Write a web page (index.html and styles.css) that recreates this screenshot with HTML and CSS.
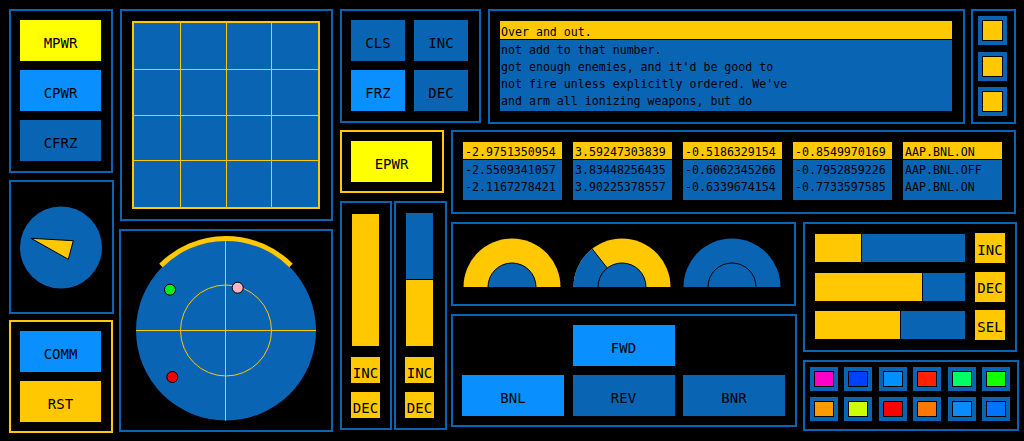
FILE: index.html
```html
<!DOCTYPE html>
<html>
<head>
<meta charset="utf-8">
<link rel="stylesheet" href="styles.css">
</head>
<body>
<div class="dash">
  <div class="col c1">
    <div class="panel p-power">
      <div class="btn big yellow">MPWR</div>
      <div class="btn big light">CPWR</div>
      <div class="btn big dark">CFRZ</div>
    </div>
    <div class="panel p-compass">
      <svg class="compass" width="101" height="130" viewBox="0 0 101 130">
        <circle cx="50" cy="65.5" r="41" fill="#0964b4"/>
        <polygon points="20,56.3 62.3,58.7 57.3,77.3" fill="#ffc800" stroke="#000" stroke-width="1"/>
      </svg>
    </div>
    <div class="panel amber-border p-comm">
      <div class="btn big light">COMM</div>
      <div class="btn big amber">RST</div>
    </div>
  </div>

  <div class="col c2">
    <div class="panel p-grid">
      <svg width="188" height="188" viewBox="0 0 188 188">
        <rect x="1" y="1" width="186" height="186" fill="#0964b4" stroke="#ffc800" stroke-width="2"/>
        <g stroke="#ffc800" stroke-width="1">
          <line x1="48.5" y1="2" x2="48.5" y2="186"/>
          <line x1="94.5" y1="2" x2="94.5" y2="186"/>
          <line x1="139.5" y1="2" x2="139.5" y2="186"/>
          <line x1="2" y1="48.5" x2="186" y2="48.5"/>
          <line x1="2" y1="94.5" x2="186" y2="94.5"/>
          <line x1="2" y1="139.5" x2="186" y2="139.5"/>
        </g>
      </svg>
    </div>
    <div class="panel p-radar">
      <svg width="210" height="199" viewBox="0 0 210 199">
        <circle cx="105" cy="99.5" r="90" fill="#0964b4"/>
        <path d="M 39.95 34.45 A 92 92 0 0 1 170.05 34.45" fill="none" stroke="#ffc800" stroke-width="5"/>
        <g stroke="#ffc800" stroke-width="1" fill="none">
          <line x1="104.5" y1="9.5" x2="104.5" y2="189.5"/>
          <line x1="15" y1="99.5" x2="195" y2="99.5"/>
          <circle cx="105" cy="99.5" r="45.5"/>
        </g>
        <circle cx="49" cy="58.7" r="5.5" fill="#00f01e" stroke="#000" stroke-width="1"/>
        <circle cx="116.7" cy="56.7" r="5.5" fill="#ffb4c0" stroke="#000" stroke-width="1"/>
        <circle cx="51.3" cy="146" r="5.5" fill="#f00000" stroke="#000" stroke-width="1"/>
      </svg>
    </div>
  </div>

  <div class="col c3">
    <div class="row top">
      <div class="panel p-cls">
        <div class="btn big dark">CLS</div>
        <div class="btn big dark">INC</div>
        <div class="btn big light">FRZ</div>
        <div class="btn big dark">DEC</div>
      </div>
      <div class="panel p-text">
        <div class="textbox">
          <div class="tline head">Over and out.</div>
          <div class="tline">not add to that number.</div>
          <div class="tline">got enough enemies, and it'd be good to</div>
          <div class="tline">not fire unless explicitly ordered. We've</div>
          <div class="tline">and arm all ionizing weapons, but do</div>
        </div>
      </div>
      <div class="panel p-squares">
        <div class="sq"><div class="sq-in"></div></div>
        <div class="sq"><div class="sq-in"></div></div>
        <div class="sq"><div class="sq-in"></div></div>
      </div>
    </div>

    <div class="row bottom">
      <div class="col sub-left">
        <div class="panel amber-border p-epwr">
          <div class="btn big yellow">EPWR</div>
        </div>
        <div class="row sliders">
          <div class="panel p-slider">
            <div class="vbar"><div class="vfill" style="height:133px"></div></div>
            <div class="btn small amber">INC</div>
            <div class="btn small amber">DEC</div>
          </div>
          <div class="panel p-slider wide">
            <div class="vbar"><div class="vfill" style="height:67px"></div></div>
            <div class="btn small amber">INC</div>
            <div class="btn small amber">DEC</div>
          </div>
        </div>
      </div>

      <div class="col sub-right">
        <div class="panel p-numbers">
          <div class="ncol">
            <div class="nrow head">-2.9751350954</div>
            <div class="nrow">-2.5509341057</div>
            <div class="nrow">-2.1167278421</div>
          </div>
          <div class="ncol">
            <div class="nrow head">3.59247303839</div>
            <div class="nrow">3.83448256435</div>
            <div class="nrow">3.90225378557</div>
          </div>
          <div class="ncol">
            <div class="nrow head">-0.5186329154</div>
            <div class="nrow">-0.6062345266</div>
            <div class="nrow">-0.6339674154</div>
          </div>
          <div class="ncol">
            <div class="nrow head">-0.8549970169</div>
            <div class="nrow">-0.7952859226</div>
            <div class="nrow">-0.7733597585</div>
          </div>
          <div class="ncol">
            <div class="nrow head">AAP.BNL.ON</div>
            <div class="nrow">AAP.BNL.OFF</div>
            <div class="nrow">AAP.BNL.ON</div>
          </div>
        </div>

        <div class="row lower">
          <div class="col">
            <div class="panel p-gauges">
              <svg width="341" height="80" viewBox="0 0 341 80">
                <path d="M 10.5 63 A 48.5 48.5 0 0 1 107.5 63 Z" fill="#ffc800"/>
                <path d="M 35 63 A 24 24 0 0 1 83 63 Z" fill="#0964b4"/>
                <path d="M 35 63 A 24 24 0 0 1 83 63" fill="none" stroke="#000" stroke-width="1"/>

                <path d="M 120.5 63 A 48.5 48.5 0 0 1 217.5 63 Z" fill="#ffc800"/>
                <path d="M 169 63 L 120.5 63 A 48.5 48.5 0 0 1 139.14 24.78 Z" fill="#0964b4"/>
                <line x1="154.22" y1="44.09" x2="139.14" y2="24.78" stroke="#000" stroke-width="1"/>
                <path d="M 145 63 A 24 24 0 0 1 193 63 Z" fill="#0964b4"/>
                <path d="M 145 63 A 24 24 0 0 1 193 63" fill="none" stroke="#000" stroke-width="1"/>

                <path d="M 230.5 63 A 48.5 48.5 0 0 1 327.5 63 Z" fill="#0964b4"/>
                <path d="M 255 63 A 24 24 0 0 1 303 63 Z" fill="#0964b4"/>
                <path d="M 255 63 A 24 24 0 0 1 303 63" fill="none" stroke="#000" stroke-width="1"/>
              </svg>
            </div>
            <div class="panel p-nav">
              <div class="btn big light fwd">FWD</div>
              <div class="btn big light r2">BNL</div>
              <div class="btn big dark r2">REV</div>
              <div class="btn big dark r2">BNR</div>
            </div>
          </div>
          <div class="col right-col">
            <div class="panel p-bars">
              <div class="hbar"><div class="hfill" style="width:47px"></div></div>
              <div class="btn mid amber">INC</div>
              <div class="hbar"><div class="hfill" style="width:108px"></div></div>
              <div class="btn mid amber">DEC</div>
              <div class="hbar"><div class="hfill" style="width:86px"></div></div>
              <div class="btn mid amber">SEL</div>
            </div>
            <div class="panel p-colors">
              <div class="sw"><div class="sw-in" style="background:#ff00c8"></div></div>
              <div class="sw"><div class="sw-in" style="background:#0040ff"></div></div>
              <div class="sw"><div class="sw-in" style="background:#0090ff"></div></div>
              <div class="sw"><div class="sw-in" style="background:#ff2000"></div></div>
              <div class="sw"><div class="sw-in" style="background:#00ff66"></div></div>
              <div class="sw"><div class="sw-in" style="background:#11ff00"></div></div>
              <div class="sw"><div class="sw-in" style="background:#ff9900"></div></div>
              <div class="sw"><div class="sw-in" style="background:#ccff00"></div></div>
              <div class="sw"><div class="sw-in" style="background:#ff0000"></div></div>
              <div class="sw"><div class="sw-in" style="background:#ff7700"></div></div>
              <div class="sw"><div class="sw-in" style="background:#0a8cff"></div></div>
              <div class="sw"><div class="sw-in" style="background:#0073ff"></div></div>
            </div>
          </div>
        </div>
      </div>
    </div>
  </div>
</div>
</body>
</html>
```

FILE: styles.css
```css
* { box-sizing: border-box; }
html, body { margin: 0; padding: 0; background: #000; }
body {
  width: 1024px;
  height: 441px;
  overflow: hidden;
  font-family: "DejaVu Sans Mono", "Liberation Mono", monospace;
  color: #000;
}
svg { display: block; }

.dash { display: flex; align-items: flex-start; padding: 9px 0 0 9px; }
.col { display: flex; flex-direction: column; align-items: flex-start; }
.row { display: flex; align-items: flex-start; }

.panel { border: 2px solid #0964b4; }
.panel.amber-border { border-color: #ffc800; }

/* buttons */
.btn {
  display: flex;
  align-items: center;
  justify-content: center;
  font-size: 14px;
  white-space: nowrap;
}
.btn.big { height: 41px; padding-top: 4px; }
.btn.small { width: 29px; height: 26px; padding-top: 5px; }
.btn.mid { width: 30px; height: 30px; padding-top: 3px; }
.yellow { background: #ffff00; }
.light { background: #0a8fff; }
.dark { background: #0964b4; }
.amber { background: #ffc800; }

/* column 1 */
.c1 { width: 105px; }
.p-power, .p-comm {
  width: 104px;
  padding: 9px;
  display: flex;
  flex-direction: column;
  gap: 9px;
}
.p-power { height: 164px; }
.p-comm { height: 113px; }
.p-power .btn, .p-comm .btn { width: 81px; }
.p-compass { width: 105px; height: 134px; margin: 7px 0 6px; }

/* column 2 */
.c2 { margin-left: 5px; width: 214px; }
.p-grid { width: 213px; height: 212px; margin-left: 1px; padding: 10px 0 0 10px; }
.p-radar { width: 214px; height: 203px; margin-top: 8px; }

/* column 3 */
.c3 { margin-left: 7px; }
.p-cls {
  width: 141px;
  height: 114px;
  padding: 9px;
  display: grid;
  grid-template-columns: 54px 54px;
  grid-auto-rows: 41px;
  gap: 9px;
}
.p-text { width: 477px; height: 115px; margin-left: 7px; padding: 10px; }
.textbox {
  width: 452px;
  height: 90px;
  background: #0964b4;
  font-size: 11.6px;
}
.tline {
  height: 17px;
  padding: 3px 0 0 1px;
  line-height: 14px;
  white-space: pre;
}
.tline.head {
  height: 19px;
  padding-top: 4px;
  background: #ffc800;
  border-bottom: 1px solid #000;
}
.p-squares {
  width: 45px;
  height: 115px;
  margin-left: 6px;
  padding: 5px 0 0 5px;
  display: flex;
  flex-direction: column;
  gap: 6.5px;
}
.sq { width: 29px; height: 29px; background: #0964b4; padding: 4px; }
.sq-in { width: 21px; height: 21px; background: #ffc800; border: 1px solid #000; }

.bottom { margin-top: 6px; }
.sub-left { width: 107px; }
.p-epwr { width: 104px; height: 63px; padding: 9px; }
.p-epwr .btn { width: 81px; }
.sliders { margin-top: 8px; }
.p-slider {
  width: 52px;
  height: 229px;
  padding: 10px 0 0 10px;
  display: flex;
  flex-direction: column;
  align-items: flex-start;
}
.p-slider.wide { width: 53px; margin-left: 2px; }
.vbar {
  width: 27px;
  height: 133px;
  background: #0964b4;
  display: flex;
  flex-direction: column;
  justify-content: flex-end;
  margin-bottom: 11px;
}
.vfill { width: 27px; background: #ffc800; border-top: 1px solid #000; }
.p-slider .btn { margin-left: -1px; }
.p-slider .btn + .btn { margin-top: 9px; }

.sub-right { margin-left: 4px; }
.p-numbers {
  width: 565px;
  height: 84px;
  padding: 10px;
  display: flex;
  gap: 11px;
  font-size: 11.6px;
}
.ncol { width: 99px; height: 58px; background: #0964b4; }
.nrow {
  height: 17px;
  padding: 3px 0 0 2px;
  line-height: 14px;
  white-space: pre;
}
.nrow.head { height: 18px; background: #ffc800; border-bottom: 1px solid #000; }

.lower { margin-top: 8px; }
.p-gauges { width: 345px; height: 84px; }
.p-nav {
  width: 346px;
  height: 113px;
  margin-top: 8px;
  padding: 9px;
  display: grid;
  grid-template-columns: 102px 102px 102px;
  grid-template-rows: 41px 41px;
  column-gap: 8.5px;
  row-gap: 9px;
}
.p-nav .fwd { grid-column: 2; grid-row: 1; }
.p-nav .r2 { grid-row: 2; }

.right-col { margin-left: 6px; }
.p-bars {
  width: 214px;
  height: 130px;
  padding: 9px 10px 10px 10px;
  display: grid;
  grid-template-columns: 150px 30px;
  grid-auto-rows: 30px;
  column-gap: 10px;
  row-gap: 8.5px;
  align-items: center;
}
.hbar { width: 150px; height: 28px; background: #0964b4; display: flex; }
.hfill { height: 28px; background: #ffc800; border-right: 1px solid #000; }

.p-colors {
  width: 216px;
  height: 71px;
  margin-top: 8px;
  padding: 5px 0 0 5px;
  display: grid;
  grid-template-columns: repeat(6, 28px);
  grid-auto-rows: 24px;
  column-gap: 6.4px;
  row-gap: 6px;
}
.sw { width: 28px; height: 24px; background: #0964b4; padding: 4px; }
.sw-in { width: 20px; height: 16px; border: 1px solid #000; }
```
